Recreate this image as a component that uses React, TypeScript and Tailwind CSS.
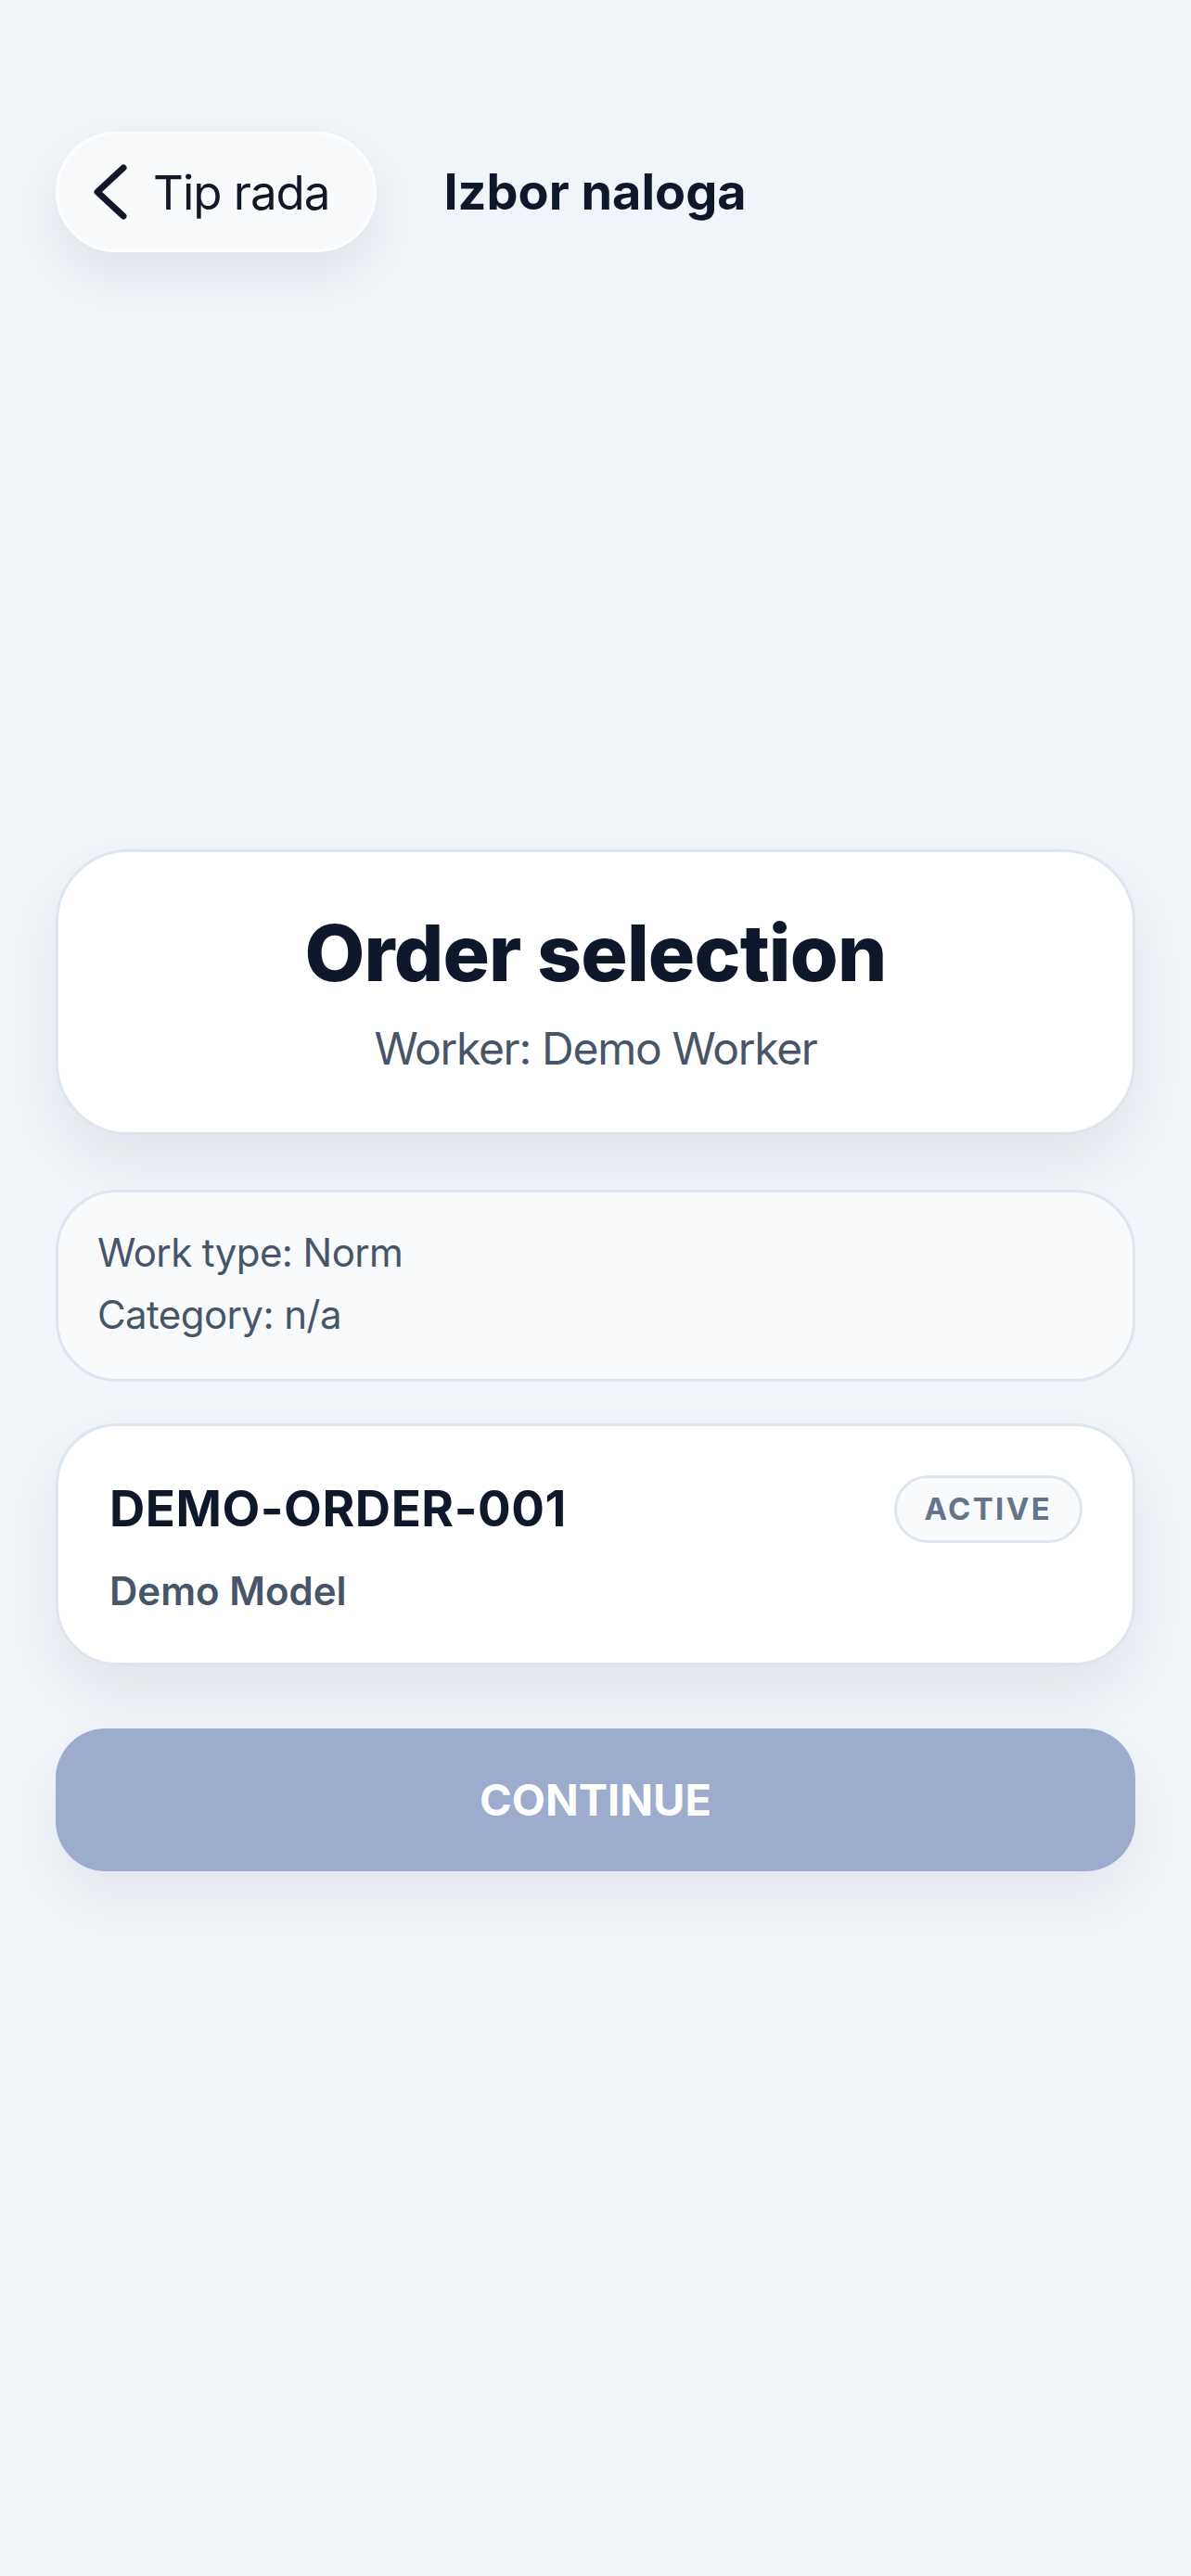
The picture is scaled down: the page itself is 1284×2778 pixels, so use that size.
export default function App() {
  return (
    <div className="min-h-[2778px] w-full bg-[#f1f4f9] font-[family-name:Inter,sans-serif] text-[#0f172a]">
      <header className="flex items-center gap-[72px] px-[60px] pt-[142px]">
        <button className="flex h-[130px] items-center gap-[26px] rounded-full border-[3px] border-[#fdfeff] bg-[#f8fafc] pl-[36px] pr-[48px] shadow-[0_24px_60px_rgba(15,23,42,0.08)]">
          <svg width="40" height="60" viewBox="0 0 40 60" fill="none" className="shrink-0">
            <polyline points="34,4 6,30 34,56" stroke="#111827" strokeWidth="7" strokeLinecap="round" strokeLinejoin="round" />
          </svg>
          <span className="text-[51px] leading-none tracking-[-0.02em] text-[#111827]">Tip rada</span>
        </button>
        <h1 className="text-[54px] font-bold leading-none text-[#0f172a]">Izbor naloga</h1>
      </header>

      <main className="mt-[644px] px-[60px]">
        <section className="rounded-[78px] border-[3px] border-[#dde5ef] bg-white pb-[54px] pt-[59px] text-center shadow-[0_30px_70px_rgba(15,23,42,0.07)]">
          <h2 className="text-[84px] font-extrabold leading-[1.2] tracking-[-0.01em] text-[#0f172a]">Order selection</h2>
          <p className="mt-4 text-[48px] leading-[1.5] tracking-[-0.027em] text-[#475569]">Worker: Demo Worker</p>
        </section>

        <section className="mt-[59px] rounded-[66px] border-[3px] border-[#dde5ef] bg-[#f8fafc] pb-[36px] pl-[42px] pr-[42px] pt-[31px] text-[42px] leading-[1.6] tracking-[-0.014em] text-[#475569]">
          <p>Work type: Norm</p>
          <p>Category: n/a</p>
        </section>

        <section className="mt-[45px] rounded-[66px] border-[3px] border-[#dde5ef] bg-white pb-[47px] pl-[55px] pr-[54px] pt-[53px] shadow-[0_30px_70px_rgba(15,23,42,0.07)]">
          <div className="flex items-center justify-between">
            <span className="text-[53px] font-bold leading-[1.2] tracking-[0.01em] text-[#0f172a]">DEMO-ORDER-001</span>
            <span className="flex h-[73px] items-center rounded-full border-[3px] border-[#dde5ef] bg-[#f8fafc] px-[30px] text-[33px] font-bold tracking-[0.07em] text-[#64748b]">
              ACTIVE
            </span>
          </div>
          <p className="mt-[23px] text-[42px] font-semibold leading-[1.4] text-[#475569]">Demo Model</p>
        </section>

        <button className="mt-[68px] flex h-[154px] w-full items-center justify-center rounded-[54px] bg-[#9dabcd] text-[47px] font-bold text-white shadow-[0_30px_70px_rgba(15,23,42,0.06)]">
          CONTINUE
        </button>
      </main>
    </div>
  );
}
